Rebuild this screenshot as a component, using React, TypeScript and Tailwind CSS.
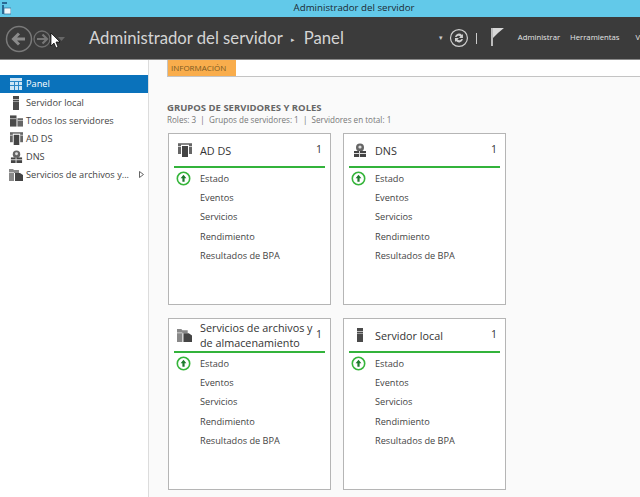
import React from "react";

const ServerIcon = () => (
  <svg width="12" height="14" viewBox="0 0 12 14">
    <rect x="3" y="0" width="6" height="14" fill="#4a4a4a" />
    <rect x="3" y="3" width="6" height="1" fill="#bbb" />
    <rect x="3" y="5" width="6" height="1" fill="#999" />
  </svg>
);

const AllServersIcon = () => (
  <svg width="13" height="12" viewBox="0 0 14 12">
    <rect x="0" y="0" width="7" height="12" fill="#4a4a4a" />
    <rect x="8" y="3" width="6" height="9" fill="#666" />
    <rect x="0" y="3" width="7" height="1" fill="#bbb" />
    <rect x="8" y="5" width="6" height="1" fill="#bbb" />
  </svg>
);

const AdIcon = ({ size = 13 }: { size?: number }) => (
  <svg width={size} height={size} viewBox="0 0 14 14">
    <rect x="0" y="0" width="14" height="2" fill="#888" />
    <rect x="0" y="1" width="3" height="10" fill="#666" />
    <rect x="11" y="1" width="3" height="10" fill="#666" />
    <rect x="4" y="3" width="6" height="11" fill="#444" />
    <rect x="0" y="3" width="3" height="1" fill="#ccc" />
    <rect x="11" y="3" width="3" height="1" fill="#ccc" />
  </svg>
);

const DnsIcon = ({ size = 13 }: { size?: number }) => (
  <svg width={size} height={size} viewBox="0 0 14 14">
    <circle cx="7" cy="4.500" r="4" fill="#666" />
    <circle cx="7" cy="4" r="1.600" fill="#ddd" />
    <rect x="1" y="8" width="12" height="6" fill="#444" />
    <rect x="1" y="10" width="12" height="1" fill="#ddd" />
    <rect x="6" y="8" width="1" height="6" fill="#ddd" />
  </svg>
);

const FilesIcon = ({ size = 14 }: { size?: number }) => (
  <svg width={size} height={size - 2} viewBox="0 0 14 12">
    <path d="M0 0h4l1 1h5v3H5v8H0z" fill="#888" />
    <path d="M6 4h5l3 2v6H6z" fill="#444" />
    <rect x="0" y="3" width="5" height="1" fill="#ccc" />
  </svg>
);

const StatusIcon = () => (
  <svg width="15" height="15" viewBox="0 0 15 15">
    <circle cx="7.500" cy="7.500" r="6.200" fill="#fff" stroke="#35b53a" strokeWidth="1.600" />
    <path d="M7.500 3.800 L10.400 7.200 H8.600 V10.800 H6.400 V7.200 H4.600 Z" fill="#1d7a2c" />
  </svg>
);

const navItems = [
  { label: "Servidor local", icon: <ServerIcon /> },
  { label: "Todos los servidores", icon: <AllServersIcon /> },
  { label: "AD DS", icon: <AdIcon /> },
  { label: "DNS", icon: <DnsIcon /> },
];

const links = ["Eventos", "Servicios", "Rendimiento", "Resultados de BPA"];

const RoleCard = ({ title, icon }: { title: React.ReactNode; icon: React.ReactNode }) => (
  <div className="w-[163px] h-[172px] border border-[#b5b5b5] bg-white px-[5px]">
    <div className="h-[32px] flex items-center border-b-[2px] border-[#33b33b] box-content">
      <div className="w-[26px] flex justify-center pr-[6px] pl-[1px] shrink-0">{icon}</div>
      <div className="flex-1 text-[10.8px] leading-[15px] text-[#333] whitespace-nowrap">{title}</div>
      <div className="w-[9px] text-[10.5px] text-[#333] font-medium">1</div>
    </div>
    <div className="flex items-center h-[20px] text-[9.2px] text-[#444] pt-[1px]">
      <div className="w-[26px] pl-[2px]"><StatusIcon /></div>
      Estado
    </div>
    {links.map((l) => (
      <div key={l} className="h-[19.5px] flex items-center pl-[26px] text-[9.2px] text-[#444]">
        {l}
      </div>
    ))}
  </div>
);

export default function App() {
  return (
    <div className="w-[640px] h-[497px] overflow-hidden flex flex-col bg-[#fafafa] font-['Open_Sans',sans-serif]">
      {/* barra de titulo */}
      <div className="h-[17px] bg-[#62c9e9] relative flex items-center justify-center text-[9.7px] text-[#1c2a33]">
        <svg className="absolute left-[1px] top-[1px]" width="10" height="14" viewBox="0 0 10 14">
          <rect x="1" y="1" width="5" height="2" fill="#2a6a94" />
          <rect x="1" y="4" width="2" height="9" fill="#2a6a94" />
          <rect x="3" y="7" width="7" height="6" fill="#eef6fa" stroke="#2a6a94" strokeWidth="0.7" />
        </svg>
        <span className="pl-[68px]">Administrador del servidor</span>
      </div>

      {/* cabecera */}
      <div className="h-[43px] bg-[#3b3b3b] border-b border-[#8a8a8a] flex items-center shrink-0">
        <div className="relative w-[89px] h-full shrink-0">
          <svg className="absolute left-[5px] top-[7px]" width="60" height="30" viewBox="0 0 60 30">
            <circle cx="14" cy="15" r="12.500" fill="none" stroke="#7a7a7a" strokeWidth="1.500" />
            <path d="M20 15H9M14 9.500 8.500 15l5.500 5.500" fill="none" stroke="#8a8a8a" strokeWidth="3" />
            <circle cx="37" cy="15" r="8" fill="none" stroke="#6f6f6f" strokeWidth="1.300" />
            <path d="M32 15h9M37.500 10.500 42 15l-4.500 4.500" fill="none" stroke="#777" strokeWidth="2.200" />
            <path d="M53 13h7l-3.500 4z" fill="#666" />
          </svg>
          <svg className="absolute left-[50px] top-[16px]" width="11" height="16" viewBox="0 0 11 16">
            <path d="M1 0v13l3-3 2 5 2-1-2-5h4z" fill="#fff" stroke="#000" strokeWidth="0.7" />
          </svg>
        </div>
        <div className="text-[16.7px] text-[#d4d4d4] flex items-center whitespace-nowrap font-['Lato',sans-serif] pt-[2px]">
          <span>Administrador del servidor</span>
          <span className="text-[7px] w-[21px] text-center">▸</span>
          <span>Panel</span>
        </div>
        <div className="ml-auto flex items-center whitespace-nowrap w-[205px] shrink-0 h-full">
          <span className="w-[8px] ml-[2px] text-[7px] text-[#ccc] text-center">▾</span>
          <svg className="ml-[4px]" width="20" height="20" viewBox="0 0 20 20">
            <circle cx="10" cy="10" r="8.500" fill="none" stroke="#cfcfcf" strokeWidth="1.200" />
            <path d="M6 9a4 4 0 0 1 7-2l1-1v4h-4l1.500-1.500a2.500 2.500 0 0 0-4 .5zM14 11a4 4 0 0 1-7 2l-1 1v-4h4l-1.500 1.500a2.500 2.500 0 0 0 4-.5z" fill="#cfcfcf" />
          </svg>
          <div className="w-[1px] h-[11px] bg-[#ccc] ml-[7px]" />
          <svg className="ml-[14px] -mt-[2px]" width="13" height="18" viewBox="0 0 13 18">
            <path d="M0 0h2v18H0z" fill="#bdbdbd" />
            <path d="M2 0h11L7 5l-5 5z" fill="#d8d8d8" />
          </svg>
          <span className="ml-[14px] text-[7.7px] text-[#e6e6e6]">Administrar</span>
          <span className="ml-[10px] text-[7.7px] text-[#e6e6e6]">Herramientas</span>
          <span className="ml-[16px] text-[7.7px] text-[#e6e6e6]">V</span>
        </div>
      </div>

      <div className="flex-1 flex min-h-0">
        {/* menu lateral */}
        <aside className="w-[149px] shrink-0 bg-white border-r border-[#dcdcdc] pt-[15px]">
          <div className="h-[18px] bg-[#0a72bb] text-white text-[9.2px] flex items-center">
            <svg className="ml-[10px] mr-[4px]" width="12" height="12" viewBox="0 0 12 12">
              <rect width="12" height="12" fill="#cfe6f5" />
              <rect x="0" y="3" width="12" height="1" fill="#2c87c6" />
              <rect x="0" y="7" width="12" height="1" fill="#2c87c6" />
              <rect x="4" y="3" width="1" height="9" fill="#2c87c6" />
              <rect x="8" y="3" width="1" height="9" fill="#2c87c6" />
            </svg>
            Panel
          </div>
          {navItems.map((n) => (
            <div key={n.label} className="h-[18px] flex items-center text-[9.2px] text-[#444] pt-[1px]">
              <div className="w-[26px] pl-[8px] pr-[2px] flex justify-center shrink-0">{n.icon}</div>
              {n.label}
            </div>
          ))}
          <div className="h-[18px] flex items-center text-[9.2px] text-[#444] pt-[1px]">
            <div className="w-[26px] pl-[8px] pr-[2px] flex justify-center shrink-0"><FilesIcon /></div>
            Servicios de archivos y...
            <svg className="ml-[10px]" width="5" height="7" viewBox="0 0 5 7">
              <path d="M.5.5 4.500 3.500.5 6.500z" fill="#fff" stroke="#555" strokeWidth="0.9" />
            </svg>
          </div>
        </aside>

        <main className="flex-1 min-w-0 pl-[18px]">
          <div className="h-[17px] bg-white border-b border-l border-[#c4c4c4] flex">
            <div className="w-[68px] bg-[#f9ad4c] text-[8px] text-[#7b5a22] flex items-center pl-[3px]">
              INFORMACIÓN
            </div>
          </div>
          <h2 className="mt-[25px] text-[9.5px] leading-[11px] font-bold text-[#666] whitespace-nowrap">
            GRUPOS DE SERVIDORES Y ROLES
          </h2>
          <p className="mt-[1px] text-[8.1px] leading-[11px] text-[#777] whitespace-nowrap">
            Roles: 3 &nbsp;|&nbsp; Grupos de servidores: 1 &nbsp;|&nbsp; Servidores en total: 1
          </p>
          <div className="mt-[8px] ml-[1px] grid grid-cols-[163px_163px] gap-x-[12px] gap-y-[13px]">
            <RoleCard title="AD DS" icon={<AdIcon size={14} />} />
            <RoleCard title="DNS" icon={<DnsIcon size={14} />} />
            <RoleCard
              title={<>Servicios de archivos y<br />de almacenamiento</>}
              icon={<FilesIcon size={15} />}
            />
            <RoleCard title="Servidor local" icon={<ServerIcon />} />
          </div>
        </main>
      </div>
    </div>
  );
}
